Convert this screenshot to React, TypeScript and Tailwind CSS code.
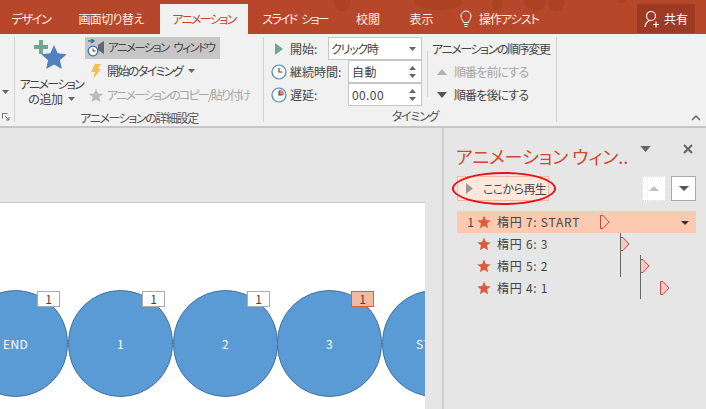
import type { ReactNode } from 'react';

const font = "font-['Noto_Sans_CJK_JP','Noto_Sans',sans-serif] [font-feature-settings:'palt']";

function Tab({ label, width, tracking, active }: { label: string; width: string; tracking: string; active?: boolean }) {
  return (
    <div
      className={`${width} ${tracking} flex h-[30px] items-center justify-center whitespace-nowrap text-[12px] ${
        active ? 'bg-[#f1f1f1] text-[#c5472a]' : 'text-[#fbeee9]'
      }`}
    >
      {label}
    </div>
  );
}

function Caret({ className = '' }: { className?: string }) {
  return (
    <svg width="7" height="4" viewBox="0 0 7 4" className={`shrink-0 ${className}`}>
      <path d="M0 0h7L3.500 4z" fill="#666" />
    </svg>
  );
}

function Clock({ filled }: { filled?: boolean }) {
  return (
    <svg width="16" height="16" viewBox="0 0 16 16">
      <circle cx="8" cy="8" r="7" fill="#fff" stroke="#4d86bd" strokeWidth="1.2" />
      {filled && <path d="M8 2.500A5.500 5.500 0 0 1 13.500 8H8z" fill="#e8806a" />}
      <path d="M8 4v4h3.500" fill="none" stroke="#444" strokeWidth="1.1" />
    </svg>
  );
}

function Spinner({ value }: { value: string }) {
  return (
    <div className="flex h-[23px] w-[74px] shrink-0 items-center justify-between border border-[#c6c6c6] bg-white pl-[3px] pr-[5px] text-[12px] tracking-[0.4px] text-[#444]">
      <span>{value}</span>
      <div className="flex flex-col gap-[4px]">
        <Caret className="rotate-180" />
        <Caret />
      </div>
    </div>
  );
}

function TimingRow({ icon, label, children }: { icon: ReactNode; label: string; children: ReactNode }) {
  return (
    <div className="flex h-[23px] items-center justify-between">
      <div className="flex items-center">
        <div className="flex w-[21px] justify-center">{icon}</div>
        <span className="whitespace-nowrap pl-[1px] text-[12px] text-[#444]">{label}</span>
      </div>
      {children}
    </div>
  );
}

function Star({ size = 14, color = '#dd5b38' }: { size?: number; color?: string }) {
  return (
    <svg width={size} height={size} viewBox="0 0 24 24" className="ml-[1px] shrink-0">
      <path d="M12 1l3.200 7.600 8.300.7-6.300 5.400 1.900 8.100L12 18.500 4.900 22.800l1.900-8.100L.5 9.300l8.300-.7z" fill={color} />
    </svg>
  );
}

function Marker({ fill }: { fill: string }) {
  return (
    <svg width="10" height="14" viewBox="0 0 10 14">
      <path d="M.5.5h2.500L9 7l-6 6.500H.5z" fill={fill} stroke="#c8434a" strokeWidth="1" />
    </svg>
  );
}

function Row({ num, name, offset, fill, active }: { num?: string; name: string; offset: string; fill: string; active?: boolean }) {
  return (
    <div className={`relative flex h-[22px] items-center text-[12px] text-[#444] ${active ? 'bg-[#fccab0]' : ''}`}>
      <span className="w-[19px] pr-[2px] text-right text-[12px]">{num}</span>
      <Star />
      <span className="ml-[6px] tracking-[0.75px]">{name}</span>
      <div className={`absolute top-[4px] ${offset}`}>
        <Marker fill={fill} />
      </div>
      {active && (
        <div className="absolute right-[7px] top-[10px]">
          <svg width="8" height="4" viewBox="0 0 8 4">
            <path d="M0 0h8L4 4z" fill="#333" />
          </svg>
        </div>
      )}
    </div>
  );
}

function Circle({ left, label }: { left: string; label: string }) {
  return (
    <div className={`absolute top-[87px] flex h-[107px] w-[105px] items-center justify-center rounded-full border border-[#41719c] bg-[#5b9bd5] text-[12px] tracking-[0.3px] text-white ${left}`}>
      {label}
    </div>
  );
}

function Tag({ left, active }: { left: string; active?: boolean }) {
  return (
    <div
      className={`absolute top-[88px] flex h-[16px] w-[23px] items-center justify-center border text-[12px] text-[#444] ${left} ${
        active ? 'border-[#d4603f] bg-[#f4b9a0]' : 'border-[#aaa] bg-white'
      }`}
    >
      1
    </div>
  );
}

export default function App() {
  return (
    <div className={`${font} flex h-[409px] w-[706px] flex-col overflow-hidden bg-[#e6e6e6]`}>
      {/* Title tabs */}
      <div className="relative flex h-[34px] shrink-0 items-end overflow-hidden bg-[#b7472a]">
        <svg width="706" height="34" viewBox="0 0 706 34" className="absolute left-0 top-0">
          <g fill="#a8401f" opacity="0.7">
            <ellipse cx="342" cy="3" rx="8" ry="8" />
            <ellipse cx="438" cy="1" rx="24" ry="9" />
            <ellipse cx="497" cy="4" rx="5" ry="6" />
            <ellipse cx="535" cy="2" rx="11" ry="9" />
            <ellipse cx="556" cy="3" rx="8" ry="8" />
            <ellipse cx="621" cy="0" rx="5" ry="3" />
          </g>
        </svg>
        <div className="relative flex w-full items-end">
          <Tab label="デザイン" width="w-[62px]" tracking="tracking-[-1.2px]" />
          <Tab label="画面切り替え" width="w-[98px]" tracking="tracking-[-0.6px]" />
          <Tab label="アニメーション" width="w-[88px]" tracking="tracking-[-1.6px]" active />
          <Tab label="スライド ショー" width="w-[94px]" tracking="tracking-[-1.8px] [word-spacing:4px]" />
          <Tab label="校閲" width="w-[52px]" tracking="tracking-[0px]" />
          <Tab label="表示" width="w-[55px]" tracking="tracking-[0px]" />
          <div className="flex h-[30px] flex-1 items-center pl-[11px] text-[12px] tracking-[-1px] text-[#fbeee9]">
            <svg width="12" height="18" viewBox="0 0 12 18" className="mr-[7px]">
              <path d="M3.500 12.500c0-2-2.500-3-2.500-6.500a5 5 0 0 1 10 0c0 3.500-2.500 4.500-2.500 6.500zM4 14.500h4M4.500 16.500h3" fill="none" stroke="#fff" strokeWidth="1" />
            </svg>
            操作アシスト
          </div>
          <div className="mb-[1px] mr-[11px] flex h-[29px] w-[58px] items-center justify-center gap-[4px] bg-[#9c3a23] text-[12px] text-white">
            <svg width="16" height="18" viewBox="0 0 16 18">
              <circle cx="7" cy="6" r="4.500" fill="none" stroke="#fff" strokeWidth="1.200" />
              <path d="M1 17c.5-4 2.500-6 5-6.500M9 14.500h6M12 11.500v6" fill="none" stroke="#fff" strokeWidth="1.200" />
            </svg>
            共有
          </div>
        </div>
      </div>

      {/* Ribbon */}
      <div className="relative flex h-[94px] shrink-0 border-b-2 border-[#c6c6c6] bg-[#f1f1f1] pt-[3px]">
        <div className="flex h-[85px] w-[15px] flex-col items-center justify-end border-r border-[#d4d4d4] pb-[1px]">
          <Caret className="mb-[19px] mr-[4px]" />
          <svg width="8" height="8" viewBox="0 0 8 8" className="mr-[2px]">
            <path d="M.5.500h5M.5.500v5M3 3l4 4M4 7h3V4" fill="none" stroke="#777" strokeWidth="1" />
          </svg>
        </div>

        {/* Detail group */}
        <div className="flex h-[85px] w-[249px] flex-col border-r border-[#d4d4d4]">
          <div className="flex h-[70px]">
            <div className="flex w-[70px] flex-col items-center pl-[3px] pt-[3px] text-[12px] leading-[15px] tracking-[-1.6px] text-[#444]">
              <svg width="34" height="32" viewBox="0 0 34 32" className="mr-[3px]">
                <path d="M21 5l3.700 8.300 9 .9-6.800 6 2 8.800L21 24.500 13.100 29l2-8.800-6.800-6 9-.9z" fill="#4f81bd" />
                <path d="M6 0h4v5h5v4h-5v5H6V9H1V5h5z" fill="#6fa892" />
              </svg>
              <span className="mt-[4px] whitespace-nowrap">アニメーション</span>
              <span className="flex items-center gap-[5px] tracking-[-0.4px]">
                の追加 <Caret />
              </span>
            </div>
            <div className="flex flex-col text-[12px]">
              <div className="flex h-[23px] w-[135px] items-center gap-[2px] whitespace-nowrap bg-[#c6c6c6] pl-[1px] text-[11.5px] tracking-[-1.6px] text-[#444] [word-spacing:4px]">
                <svg width="20" height="18" viewBox="0 0 20 18" className="shrink-0">
                  <path d="M12 6l6-4v13l-6-4z" fill="#666" />
                  <path d="M2 2h5M5 0l3 2-3 2" fill="none" stroke="#2f75b5" strokeWidth="1.400" />
                  <circle cx="7" cy="12" r="4.800" fill="#fff" stroke="#2f75b5" strokeWidth="1.300" />
                  <path d="M7 9.500V12h2.500" fill="none" stroke="#333" />
                </svg>
                アニメーション ウィンドウ
              </div>
              <div className="flex h-[25px] items-center gap-[6px] pl-[6px] tracking-[-1.6px] text-[#444]">
                <svg width="10" height="15" viewBox="0 0 10 15" className="shrink-0">
                  <path d="M4 0h6L7 5h3L2 15l2-7H0z" fill="#f3c14b" />
                </svg>
                <span className="whitespace-nowrap">開始のタイミング</span>
                <Caret />
              </div>
              <div className="flex h-[25px] items-center gap-[3px] pl-[3px] tracking-[-1.8px] text-[#a6a6a6]">
                <svg width="16" height="15" viewBox="0 0 24 24" className="shrink-0">
                  <path d="M12 1l3.200 7.600 8.300.7-6.300 5.400 1.900 8.100L12 18.500 4.900 22.800l1.900-8.100L.5 9.300l8.300-.7z" fill="#bbb" />
                </svg>
                <span className="whitespace-nowrap">アニメーションのコピー/貼り付け</span>
              </div>
            </div>
          </div>
          <div className="mt-[2px] text-center text-[12px] tracking-[-1.4px] text-[#555]">アニメーションの詳細設定</div>
        </div>

        {/* Timing group */}
        <div className="flex h-[85px] w-[293px] flex-col border-r border-[#d4d4d4]">
          <div className="flex h-[70px] pl-[4px]">
            <div className="flex w-[154px] flex-col">
              <TimingRow
                icon={
                  <svg width="10" height="12" viewBox="0 0 10 12">
                    <path d="M1 0l8 6-8 6z" fill="#6fa892" />
                  </svg>
                }
                label="開始:"
              >
                <div className="flex h-[23px] w-[94px] shrink-0 items-center justify-between border border-[#c6c6c6] bg-white pl-[2px] pr-[5px] text-[12px] tracking-[-1.2px] text-[#444]">
                  クリック時 <Caret />
                </div>
              </TimingRow>
              <TimingRow icon={<Clock />} label="継続時間:">
                <Spinner value="自動" />
              </TimingRow>
              <TimingRow icon={<Clock filled />} label="遅延:">
                <Spinner value="00.00" />
              </TimingRow>
            </div>
            <div className="ml-[5px] mt-[14px] h-[46px] w-px bg-[#d4d4d4]" />
            <div className="ml-[4px] flex flex-col text-[12px] text-[#444]">
              <div className="flex h-[23px] items-center whitespace-nowrap tracking-[-1.4px]">アニメーションの順序変更</div>
              <div className="flex h-[23px] items-center gap-[7px] whitespace-nowrap pl-[5px] tracking-[-0.9px] text-[#a6a6a6]">
                <svg width="10" height="6" viewBox="0 0 10 6" className="shrink-0">
                  <path d="M5 0l5 6H0z" fill="#b0b0b0" />
                </svg>
                順番を前にする
              </div>
              <div className="flex h-[23px] items-center gap-[7px] whitespace-nowrap pl-[5px] tracking-[-0.9px]">
                <svg width="10" height="6" viewBox="0 0 10 6" className="shrink-0">
                  <path d="M0 0h10L5 6z" fill="#555" />
                </svg>
                順番を後にする
              </div>
            </div>
          </div>
          <div className="mt-[1px] pl-[10px] text-center text-[12px] tracking-[-1.2px] text-[#555]">タイミング</div>
        </div>

        <svg width="10" height="7" viewBox="0 0 10 7" className="absolute bottom-[5px] right-[5px]">
          <path d="M1 6l4-4 4 4" fill="none" stroke="#666" strokeWidth="1.500" />
        </svg>
      </div>

      {/* Body */}
      <div className="flex min-h-0 flex-1">
        <div className="relative w-[442px] shrink-0 overflow-hidden">
          <div className="absolute left-0 top-[74px] h-[210px] w-[425px] overflow-hidden border-t border-[#c6c6c6] bg-white">
            <Circle left="left-[-37px]" label="END" />
            <Circle left="left-[68px]" label="1" />
            <Circle left="left-[173px]" label="2" />
            <Circle left="left-[277px]" label="3" />
            <Circle left="left-[382px]" label="START" />
            <Tag left="left-[37px]" />
            <Tag left="left-[142px]" />
            <Tag left="left-[247px]" />
            <Tag left="left-[351px]" active />
          </div>
        </div>

        {/* Animation pane */}
        <div className="relative flex-1 border-l-2 border-[#cfcfcf] pl-[13px] pr-[10px]">
          <div className="ml-[-1px] flex h-[48px] items-center pt-[8px]">
            <span className="whitespace-nowrap text-[18px] tracking-[0px] text-[#d0492a]">アニメーション ウィン..</span>
            <Caret className="ml-[14px] mt-[-14px] scale-150" />
            <svg width="12" height="12" viewBox="0 0 12 12" className="ml-[33px] mt-[-14px]">
              <path d="M2 2l8 8M10 2l-8 8" stroke="#666" strokeWidth="2" />
            </svg>
          </div>
          <div className="flex h-[25px] items-center justify-between">
            <div className="relative flex h-[25px] w-[92px] items-center border border-[#f5b9a0] bg-[#fde8de] pl-[8px] text-[12px] text-[#444]">
              <svg width="7" height="11" viewBox="0 0 7 11" className="shrink-0">
                <path d="M0 0l7 5.500L0 11z" fill="#999" />
              </svg>
              <span className="ml-[10px] whitespace-nowrap tracking-[-0.6px]">ここから再生</span>
              <div className="absolute left-[-6px] top-[-5px] h-[33px] w-[104px] rounded-[50%] border-[2px] border-[#e8101a]" />
            </div>
            <div className="flex gap-[5px]">
              <div className="flex h-[25px] w-[24px] items-center justify-center border border-dotted border-[#ddd] bg-white">
                <svg width="10" height="5" viewBox="0 0 10 5">
                  <path d="M5 0l5 5H0z" fill="#c0c0c0" />
                </svg>
              </div>
              <div className="flex h-[25px] w-[25px] items-center justify-center border border-[#aaa] bg-white">
                <svg width="10" height="5" viewBox="0 0 10 5">
                  <path d="M0 0h10L5 5z" fill="#555" />
                </svg>
              </div>
            </div>
          </div>
          <div className="relative mt-[10px]">
            <Row num="1" name="楕円 7: START" offset="left-[143px]" fill="#fccab0" active />
            <Row name="楕円 6: 3" offset="left-[163px]" fill="#f9c9c0" />
            <Row name="楕円 5: 2" offset="left-[183px]" fill="#f9c9c0" />
            <Row name="楕円 4: 1" offset="left-[203px]" fill="#f9c9c0" />
            <div className="absolute left-[163px] top-[22px] h-[44px] w-px bg-[#666]" />
            <div className="absolute left-[183px] top-[44px] h-[44px] w-px bg-[#666]" />
          </div>
        </div>
      </div>
    </div>
  );
}
